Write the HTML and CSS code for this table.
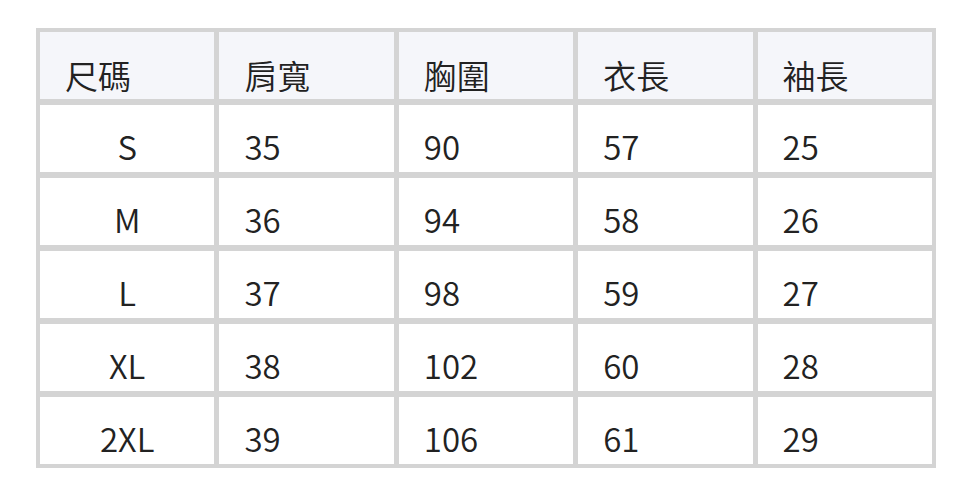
FILE: index.html
```html
<!DOCTYPE html>
<html lang="zh-Hant">
<head>
<meta charset="utf-8">
<link rel="stylesheet" href="styles.css">
</head>
<body>
<div class="page">
  <div class="size-table">
    <div class="cell head">尺碼</div>
    <div class="cell head">肩寬</div>
    <div class="cell head">胸圍</div>
    <div class="cell head">衣長</div>
    <div class="cell head">袖長</div>

    <div class="cell size">S</div>
    <div class="cell">35</div>
    <div class="cell">90</div>
    <div class="cell">57</div>
    <div class="cell">25</div>

    <div class="cell size">M</div>
    <div class="cell">36</div>
    <div class="cell">94</div>
    <div class="cell">58</div>
    <div class="cell">26</div>

    <div class="cell size">L</div>
    <div class="cell">37</div>
    <div class="cell">98</div>
    <div class="cell">59</div>
    <div class="cell">27</div>

    <div class="cell size">XL</div>
    <div class="cell">38</div>
    <div class="cell">102</div>
    <div class="cell">60</div>
    <div class="cell">28</div>

    <div class="cell size">2XL</div>
    <div class="cell">39</div>
    <div class="cell">106</div>
    <div class="cell">61</div>
    <div class="cell">29</div>
  </div>
</div>
</body>
</html>
```

FILE: styles.css
```css
html, body {
  margin: 0;
  padding: 0;
  background: #ffffff;
}

.page {
  padding: 28px 0 0 36px;
}

.size-table {
  width: 900px;
  box-sizing: border-box;
  display: grid;
  grid-template-columns: repeat(5, 1fr);
  grid-auto-rows: 67px;
  column-gap: 5px;
  row-gap: 6px;
  padding: 4px;
  background: #d4d4d4;
  font-family: "Noto Sans CJK TC", "Noto Sans", sans-serif;
  font-size: 33px;
  font-weight: 350;
  color: #222222;
}

.cell {
  background: #ffffff;
  box-sizing: border-box;
  padding: 17px 25px 0;
  line-height: 48px;
  white-space: nowrap;
}

.cell.head {
  background: #f5f6fa;
  padding-top: 19px;
}

.cell.size {
  text-align: center;
  padding-left: 0;
  padding-right: 0;
}
```
